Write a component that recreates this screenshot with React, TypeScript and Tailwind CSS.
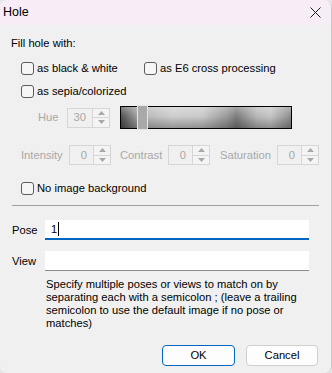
import React from "react";

const font = { fontFamily: '"Liberation Sans", Arial, sans-serif' };

function Check({ label, className = "" }: { label: string; className?: string }) {
  return (
    <label className={"flex items-center h-[14px] " + className}>
      <span className="w-[13px] h-[13px] rounded-[3px] border border-[#5c5c5c] bg-[#f6f6f6] shrink-0" />
      <span className="ml-[3px] text-black leading-[14px] whitespace-nowrap">{label}</span>
    </label>
  );
}

function Spin({ value, className = "" }: { value: string; className?: string }) {
  return (
    <div className={"flex h-[20px] border border-[#d6d6d6] bg-[#f0f0f0] " + className}>
      <div className="flex-1 flex items-center justify-end pr-[6px] text-[#a8a8a8]">{value}</div>
      <div className="w-[17px] flex flex-col border-l border-[#d6d6d6]">
        <div className="flex-1 flex items-center justify-center border-b border-[#d6d6d6] bg-[#f4f4f4]">
          <svg width="7" height="4" viewBox="0 0 7 4">
            <path d="M0 4 L3.5 0 L7 4 Z" fill="#a8a8a8" />
          </svg>
        </div>
        <div className="flex-1 flex items-center justify-center bg-[#f4f4f4]">
          <svg width="7" height="4" viewBox="0 0 7 4">
            <path d="M0 0 L3.5 4 L7 0 Z" fill="#a8a8a8" />
          </svg>
        </div>
      </div>
    </div>
  );
}

export default function App() {
  return (
    <div className="w-[332px] h-[373px] bg-[#e6e6e6] text-[11.2px]" style={font}>
      <div className="w-[332px] h-[373px] rounded-[7px] overflow-hidden bg-[#f0f0f0] flex flex-col border-r border-[#c9c9c9]">
        {/* title bar */}
        <div className="h-[25px] bg-[#f7edf6] flex items-center justify-between shrink-0">
          <span className="ml-[3px] text-[12.5px] text-black">Hole</span>
          <svg className="mr-[10px]" width="11" height="11" viewBox="0 0 11 11">
            <path d="M0.5 0.5 L10.5 10.5 M10.5 0.5 L0.5 10.5" stroke="#1a1a1a" strokeWidth="1" />
          </svg>
        </div>

        <div className="mt-[11px] ml-[11px] h-[14px] leading-[14px] text-black">Fill hole with:</div>

        <div className="mt-[11px] ml-[21px] flex">
          <Check label="as black & white" className="w-[123px]" />
          <Check label="as E6 cross processing" />
        </div>

        <div className="mt-[9px] ml-[21px] flex">
          <Check label="as sepia/colorized" />
        </div>

        <div className="mt-[8px] flex items-center h-[23px]">
          <span className="ml-[38px] w-[29px] text-[#a8a8a8]">Hue</span>
          <Spin value="30" className="w-[43px]" />
          <div className="relative ml-[10px] w-[172px] h-[23px] border border-black bg-[linear-gradient(to_bottom,rgba(255,255,255,0.3),rgba(255,255,255,0)_45%,rgba(0,0,0,0.28)),linear-gradient(to_right,#505050,#b4b4b4_12%,#cdcdcd_30%,#c8c8c8_48%,#9a9a9a_62%,#7c7c7c_68%,#b8b8b8_80%,#c4c4c4_88%,#8c8c8c_100%)]">
            <div className="absolute left-[16px] top-[-2px] w-[11px] h-[25px] border border-[#e4e4e4] bg-[#a9a9a9]" />
          </div>
        </div>

        <div className="mt-[16px] flex items-center h-[20px] text-[#a8a8a8]">
          <span className="ml-[21px] w-[48px]">Intensity</span>
          <Spin value="0" className="w-[42px]" />
          <span className="ml-[9px] w-[48px]">Contrast</span>
          <Spin value="0" className="w-[42px]" />
          <span className="ml-[10px] w-[57px]">Saturation</span>
          <Spin value="0" className="w-[42px]" />
        </div>

        <div className="mt-[16px] ml-[21px] flex">
          <Check label="No image background" />
        </div>

        <div className="mt-[10px] mx-[12px] h-[2px] border-t border-[#a0a0a0] border-b-white" />

        <div className="mt-[13px] flex items-center h-[20px]">
          <span className="ml-[12px] w-[33px] text-black">Pose</span>
          <div className="w-[264px] h-[20px] bg-white border-b-2 border-[#0067c0] flex items-center pl-[6px] text-black">
            1<span className="w-px h-[14px] bg-black ml-[1px]" />
          </div>
        </div>

        <div className="mt-[11px] flex items-center h-[20px]">
          <span className="ml-[12px] w-[33px] text-black">View</span>
          <div className="w-[264px] h-[20px] bg-white border-b border-[#8a8a8a]" />
        </div>

        <p className="mt-[7px] ml-[46px] mr-[24px] leading-[13px] text-black">
          Specify multiple poses or views to match on by separating each with a semicolon ; (leave a trailing semicolon to use the default image if no pose or matches)
        </p>

        <div className="mt-[15px] flex justify-end gap-[11px] mr-[13px]">
          <button className="w-[73px] h-[21px] rounded-[4px] border border-[#0067c0] bg-[#fdfdfd] text-black">OK</button>
          <button className="w-[72px] h-[21px] rounded-[4px] border border-[#d0d0d0] bg-[#fdfdfd] text-black">Cancel</button>
        </div>
      </div>
    </div>
  );
}
